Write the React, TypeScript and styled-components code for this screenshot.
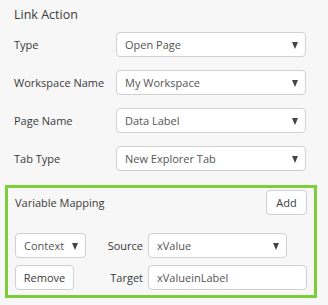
import React from "react";
import styled, { createGlobalStyle } from "styled-components";

const GlobalStyle = createGlobalStyle`
  html, body {
    margin: 0;
    padding: 0;
    background: #f7f7f7;
  }
  body {
    font-family: "Segoe UI", "Open Sans", "Liberation Sans", sans-serif;
    color: #333;
  }
`;

const Panel = styled.div`
  width: 328px;
  height: 305px;
  box-sizing: border-box;
  padding: 5px 0 0 0;
  background: #f7f7f7;
`;

const Title = styled.div`
  font-size: 12.5px;
  line-height: 20px;
  height: 20px;
  padding-left: 14px;
  margin-bottom: 7px;
  color: #3a3a3a;
`;

const Form = styled.div`
  display: flex;
  flex-direction: column;
  gap: 13px;
  padding: 0 22px 0 14px;
`;

const Row = styled.div`
  display: grid;
  grid-template-columns: 102px 190px;
  align-items: center;
`;

const Label = styled.label<{ $align?: "left" | "right" }>`
  font-size: 11px;
  text-align: ${({ $align }) => $align || "left"};
  padding-right: ${({ $align }) => ($align === "right" ? "5px" : "0")};
  color: #3a3a3a;
  white-space: nowrap;
`;

const Field = styled.div<{ $width?: number }>`
  box-sizing: border-box;
  height: 25px;
  width: ${({ $width }) => ($width ? `${$width}px` : "100%")};
  background: #fff;
  border: 1px solid #d0d0d0;
  border-radius: 4px;
  display: flex;
  align-items: center;
  justify-content: space-between;
  padding: 0 7px 0 8px;
  font-size: 11px;
  color: #555;
  white-space: nowrap;
`;

const Arrow = styled.span`
  width: 0;
  height: 0;
  border-left: 3.5px solid transparent;
  border-right: 3.5px solid transparent;
  border-top: 7px solid #444;
  margin-top: 1px;
`;

const MappingBox = styled.div`
  margin: 14px 0 0 5px;
  width: 312px;
  box-sizing: border-box;
  border: 3px solid #7ccf3a;
  padding: 2px 7px 5px 7px;
`;

const MappingHeader = styled.div`
  display: flex;
  align-items: center;
  justify-content: space-between;
  height: 25px;
`;

const MappingGrid = styled.div`
  margin-top: 18px;
  display: grid;
  grid-template-columns: 71px 62px 159px;
  grid-auto-rows: 25px;
  row-gap: 7px;
  align-items: center;
`;

const Button = styled.button<{ $width: number }>`
  box-sizing: border-box;
  width: ${({ $width }) => $width}px;
  height: 25px;
  background: #fff;
  border: 1px solid #d0d0d0;
  border-radius: 4px;
  font-family: inherit;
  font-size: 11px;
  color: #3a3a3a;
  padding: 0;
  cursor: pointer;
`;

const Select = ({ value, width }: { value: string; width?: number }) => (
  <Field $width={width}>
    <span>{value}</span>
    <Arrow />
  </Field>
);

const fields = [
  { label: "Type", value: "Open Page" },
  { label: "Workspace Name", value: "My Workspace" },
  { label: "Page Name", value: "Data Label" },
  { label: "Tab Type", value: "New Explorer Tab" },
];

export default function App() {
  return (
    <Panel>
      <GlobalStyle />
      <Title>Link Action</Title>
      <Form>
        {fields.map((f) => (
          <Row key={f.label}>
            <Label>{f.label}</Label>
            <Select value={f.value} />
          </Row>
        ))}
      </Form>
      <MappingBox>
        <MappingHeader>
          <Label>Variable Mapping</Label>
          <Button $width={41}>Add</Button>
        </MappingHeader>
        <MappingGrid>
          <Select value="Context" width={71} />
          <Label $align="right">Source</Label>
          <Select value="xValue" width={139} />
          <Button $width={59}>Remove</Button>
          <Label $align="right">Target</Label>
          <Field $width={159}>xValueinLabel</Field>
        </MappingGrid>
      </MappingBox>
    </Panel>
  );
}
